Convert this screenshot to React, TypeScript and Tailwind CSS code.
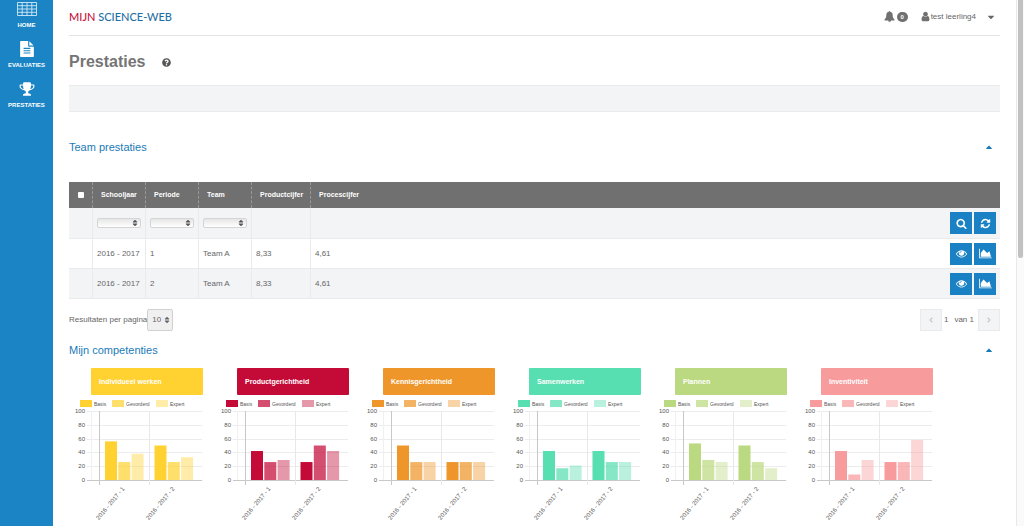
import React from 'react';
import { FaQuestionCircle, FaCaretDown, FaCaretUp, FaSort, FaAngleLeft, FaAngleRight } from 'react-icons/fa';

const ICONS = {
  fileText:
    'M1596 476q14 14 28 36h-472v-472q22 14 36 28zm-476 164h544v1056q0 40-28 68t-68 28h-1344q-40 0-68-28t-28-68v-1600q0-40 28-68t68-28h800v544q0 40 28 68t68 28zm160 736v-64q0-14-9-23t-23-9h-704q-14 0-23 9t-9 23v64q0 14 9 23t23 9h704q14 0 23-9t9-23zm0-256v-64q0-14-9-23t-23-9h-704q-14 0-23 9t-9 23v64q0 14 9 23t23 9h704q14 0 23-9t9-23zm0-256v-64q0-14-9-23t-23-9h-704q-14 0-23 9t-9 23v64q0 14 9 23t23 9h704q14 0 23-9t9-23z',
  trophy:
    'M522 883q-74-162-74-371h-256v96q0 78 94.5 162t235.5 113zm1078-275v-96h-256q0 209-74 371 141-29 235.5-113t94.5-162zm128-128v128q0 71-41.5 143t-112 130-173 97.5-215.5 44.5q-42 54-95 95-38 34-52.5 72.5t-14.5 89.5q0 54 30.5 91t97.5 37q75 0 133.5 45.5t58.5 114.5v64q0 14-9 23t-23 9h-832q-14 0-23-9t-9-23v-64q0-69 58.5-114.5t133.5-45.5q67 0 97.5-37t30.5-91q0-51-14.5-89.5t-52.5-72.5q-53-41-95-95-113-5-215.5-44.5t-173-97.5-112-130-41.5-143v-128q0-40 28-68t68-28h288v-96q0-66 47-113t113-47h576q66 0 113 47t47 113v96h288q40 0 68 28t28 68z',
  bell: 'M912 1696q0-16-16-16-59 0-101.5-42.5t-42.5-101.5q0-16-16-16t-16 16q0 73 51.5 124.5t124.5 51.5q16 0 16-16zm816-288q0 52-38 90t-90 38h-448q0 106-75 181t-181 75-181-75-75-181h-448q-52 0-90-38t-38-90q50-42 91-88t85-119.5 74.5-158.5 50-206 19.5-260q0-152 117-282.5t307-158.5q-8-19-8-39 0-40 28-68t68-28 68 28 28 68q0 20-8 39 190 28 307 158.5t117 282.5q0 139 19.5 260t50 206 74.5 158.5 85 119.5 91 88z',
  user: 'M1536 1399q0 109-62.5 187t-150.5 78h-854q-88 0-150.5-78t-62.5-187q0-85 8.5-160.5t31.5-152 58.5-131 94-89 134.5-34.5q131 128 313 128t313-128q76 0 134.5 34.5t94 89 58.5 131 31.5 152 8.5 160.5zm-256-887q0 159-112.5 271.5t-271.5 112.5-271.5-112.5-112.5-271.5 112.5-271.5 271.5-112.5 271.5 112.5 112.5 271.5z',
  search:
    'M1216 832q0-185-131.5-316.5t-316.5-131.5-316.5 131.5-131.5 316.5 131.5 316.5 316.5 131.5 316.5-131.5 131.5-316.5zm512 832q0 52-38 90t-90 38q-54 0-90-38l-343-342q-179 124-399 124-143 0-273.5-55.5t-225-150-150-225-55.5-273.5 55.5-273.5 150-225 225-150 273.5-55.5 273.5 55.5 225 150 150 225 55.5 273.5q0 220-124 399l343 343q37 37 37 90z',
  refresh:
    'M1639 1056q0 5-1 7-64 268-268 434.5t-478 166.5q-146 0-282.5-55t-243.5-157l-129 129q-19 19-45 19t-45-19-19-45v-448q0-26 19-45t45-19h448q26 0 45 19t19 45-19 45l-137 137q71 66 161 102t187 36q134 0 250-65t186-179q11-17 53-117 8-23 30-23h192q13 0 22.5 9.5t9.5 22.5zm25-800v448q0 26-19 45t-45 19h-448q-26 0-45-19t-19-45 19-45l138-138q-148-137-349-137-134 0-250 65t-186 179q-11 17-53 117-8 23-30 23h-199q-13 0-22.5-9.5t-9.5-22.5v-7q65-268 270-434.5t480-166.5q146 0 284 55.5t245 156.5l130-129q19-19 45-19t45 19 19 45z',
  eye: 'M1664 960q-152-236-381-353 61 104 61 225 0 185-131.5 316.5t-316.5 131.5-316.5-131.5-131.5-316.5q0-121 61-225-229 117-381 353 133 205 333.5 326.5t434.5 121.5 434.5-121.5 333.5-326.5zm-720-384q0-20-14-34t-34-14q-125 0-214.5 89.5t-89.5 214.5q0 20 14 34t34 14 34-14 14-34q0-86 61-147t147-61q20 0 34-14t14-34zm848 384q0 34-20 69-140 230-376.5 368.5t-499.5 138.5-499.5-139-376.5-368q-20-35-20-69t20-69q140-229 376.5-368t499.5-139 499.5 139 376.5 368q20 35 20 69z',
  chart: 'M2048 1536v128h-2048v-1536h128v1408h1920zm-384-1024l256 896h-1664v-576l448-576 576 576z',
};

type IconProps = { name: keyof typeof ICONS; className: string };

const Icon: React.FC<IconProps> = ({ name, className }) => (
  <svg
    viewBox={name === 'chart' ? '0 0 2048 1792' : '0 0 1792 1792'}
    fill="currentColor"
    aria-hidden="true"
    className={className}
  >
    <path d={ICONS[name]} />
  </svg>
);

const GridIcon = () => (
  <svg viewBox="0 0 20 14" className="w-5 h-[14px]" fill="none" stroke="#d3e9f7" strokeWidth="0.9" aria-hidden="true">
    <path d="M.5.5h19v13H.5zM.5 3.7h19M.5 7h19M.5 10.3h19M5.2.5v13M10 .5v13M14.8.5v13" />
  </svg>
);

const competencies = [
  { title: 'Individueel werken', color: '#ffd232', values: [[56, 26, 38], [50, 26, 33]] },
  { title: 'Productgerichtheid', color: '#c40a37', values: [[42, 26, 29], [26, 50, 42]] },
  { title: 'Kennisgerichtheid', color: '#ef962a', values: [[50, 26, 26], [26, 26, 26]] },
  { title: 'Samenwerken', color: '#57deb1', values: [[42, 17, 21], [42, 26, 26]] },
  { title: 'Plannen', color: '#bbd980', values: [[53, 29, 26], [50, 26, 17]] },
  { title: 'Inventiviteit', color: '#f79b9d', values: [[42, 8, 29], [26, 26, 58]] },
];

const levels = [
  { label: 'Basis', opacity: 1, x: 11 },
  { label: 'Gevorderd', opacity: 0.72, x: 43 },
  { label: 'Expert', opacity: 0.42, x: 87 },
];

const teamRows = [
  { year: '2016 - 2017', period: '1', team: 'Team A', product: '8,33', process: '4,61' },
  { year: '2016 - 2017', period: '2', team: 'Team A', product: '8,33', process: '4,61' },
];

const BASE = 84;
const SCALE = 0.69;

const CompetencyChart: React.FC<{ color: string; values: number[][] }> = ({ color, values }) => (
  <svg width="146" height="130" className="mt-px block font-['Liberation_Sans',Arial,sans-serif]" fill="#555">
    {levels.map((level) => (
      <g key={level.label}>
        <rect x={level.x} y="4" width="12" height="7" fill={color} opacity={level.opacity} />
        <text x={level.x + 14} y="10" fontSize="5">{level.label}</text>
      </g>
    ))}
    {[0, 20, 40, 60, 80, 100].map((tick) => (
      <g key={tick}>
        <text x="16" y={BASE - tick * SCALE + 2} fontSize="6" textAnchor="end">{tick}</text>
        <rect x="18" y={Math.round(BASE - tick * SCALE)} width="115" height="1" fill={tick ? '#ececec' : '#c8c8c8'} />
      </g>
    ))}
    <rect x="22" y="15" width="1" height="69" fill="#f0f0f0" />
    <rect x="30" y="15" width="1" height="74" fill="#c8c8c8" />
    <rect x="80" y="15" width="1" height="74" fill="#e8e8e8" />
    {values.map((group, g) => (
      <g key={g}>
        {group.map((value, i) => (
          <rect
            key={i}
            x={36 + g * 49.5 + i * 13.3}
            y={BASE - value * SCALE}
            width="12"
            height={value * SCALE}
            fill={color}
            opacity={levels[i].opacity}
          />
        ))}
        <text fontSize="6" textAnchor="end" transform={`translate(${56 + g * 50} 93) rotate(-50)`}>
          2016 - 2017 - {g + 1}
        </text>
      </g>
    ))}
  </svg>
);

const NavItem: React.FC<{ label: string; children: React.ReactNode }> = ({ label, children }) => (
  <a href="#" className="flex h-10 flex-col items-center gap-1 text-[6px] leading-[8px] font-bold text-white">
    <span className="flex h-4 items-center">{children}</span>
    {label}
  </a>
);

const FilterSelect: React.FC<{ label: string }> = ({ label }) => (
  <div className="relative">
    <select
      aria-label={label}
      className="block h-[10px] w-11 appearance-none rounded-[2px] border border-[#d5d5d5] bg-linear-to-b from-[#e6e6e6] to-white"
    >
      <option></option>
    </select>
    <FaSort className="pointer-events-none absolute top-px right-0.5 h-2 w-2 text-[#555]" />
  </div>
);

const ActionButton: React.FC<IconProps & { label: string }> = ({ label, name, className }) => (
  <button aria-label={label} className="flex h-[22px] w-[22px] items-center justify-center bg-[#1a82c4] text-white">
    <Icon name={name} className={className} />
  </button>
);

const SectionTitle: React.FC<{ title: string }> = ({ title }) => (
  <div className="flex items-center justify-between pr-1.5 text-[#1a7bb8]">
    <h2 className="text-[11px] leading-4">{title}</h2>
    <button aria-label={`${title} inklappen`}>
      <FaCaretUp className="h-[10px] w-[10px]" />
    </button>
  </div>
);

const head = 'border-r border-dashed border-[#999] px-2 text-left font-bold';
const cell = 'border-b border-b-[#e9eaec] border-r border-r-[#e9eaec] px-1 py-0';

const App: React.FC = () => {
  return (
    <div className="flex h-screen overflow-hidden bg-white font-['Liberation_Sans',Arial,sans-serif] text-[8px] leading-[10px] text-[#666]">
      <nav className="flex w-[53px] shrink-0 flex-col bg-[#1a84c4] pt-px">
        <NavItem label="HOME"><GridIcon /></NavItem>
        <NavItem label="EVALUATIES"><Icon name="fileText" className="h-4 w-4" /></NavItem>
        <NavItem label="PRESTATIES"><Icon name="trophy" className="h-4 w-4" /></NavItem>
      </nav>

      <main className="min-w-0 flex-1 px-4">
        <header className="flex h-9 items-center justify-between border-b border-[#e4e4e4] pb-0.5">
          <a href="#" className="font-[Lato,sans-serif] text-[11px] leading-4 font-medium text-[#1f6fa5]">
            <span className="text-[#c8143f]">MIJN</span> SCIENCE-WEB
          </a>
          <div className="flex items-center pr-1">
            <button aria-label="Meldingen" className="flex items-center gap-0.5">
              <Icon name="bell" className="h-[11px] w-[11px] text-[#707070]" />
              <span className="flex h-[10px] w-[11px] items-center justify-center rounded-full bg-[#707070] text-[6px] font-bold text-white">0</span>
            </button>
            <button className="ml-3 flex items-center">
              <Icon name="user" className="h-[11px] w-[11px] text-[#707070]" />
              <span>test leerling4</span>
              <FaCaretDown className="ml-2.5 h-[10px] w-[10px]" />
            </button>
          </div>
        </header>

        <div className="mt-4 flex items-center gap-4">
          <h1 className="text-[16px] leading-5 font-bold text-[#757575]">Prestaties</h1>
          <FaQuestionCircle className="h-[9px] w-[9px] text-[#555]" />
        </div>
        <div className="mt-[13px] mb-[27px] h-[27px] border-y border-[#e9eaec] bg-[#f3f4f6]" />

        <SectionTitle title="Team prestaties" />

        <table className="mt-[27px] w-full table-fixed border-separate border-spacing-0">
          <thead>
            <tr className="h-[26px] bg-[#707070] text-[7px] text-white">
              <th className="w-6 border-r border-dashed border-[#999] p-0">
                <input type="checkbox" aria-label="Alles selecteren" className="mx-auto block h-1.5 w-1.5 appearance-none rounded-[1px] bg-white" />
              </th>
              <th className={`w-[53px] ${head}`}>Schooljaar</th>
              <th className={`w-[53px] ${head}`}>Periode</th>
              <th className={`w-[53px] ${head}`}>Team</th>
              <th className={`w-[59px] ${head}`}>Productcijfer</th>
              <th className="px-2 text-left font-bold">Procescijfer</th>
              <th className="w-[56px]"></th>
            </tr>
          </thead>
          <tbody>
            <tr className="h-[31px] bg-[#f3f4f6]">
              <td className={cell}></td>
              <td className={cell}><FilterSelect label="Schooljaar" /></td>
              <td className={cell}><FilterSelect label="Periode" /></td>
              <td className={cell}><FilterSelect label="Team" /></td>
              <td className={cell}></td>
              <td className="border-b border-[#e9eaec]"></td>
              <td className="border-b border-[#e9eaec] p-0 pr-1">
                <div className="flex justify-end gap-0.5">
                  <ActionButton label="Zoeken" name="search" className="h-[11px] w-[11px]" />
                  <ActionButton label="Vernieuwen" name="refresh" className="h-[11px] w-[11px]" />
                </div>
              </td>
            </tr>
            {teamRows.map((row) => (
              <tr key={row.period} className="h-[30px] even:bg-white odd:bg-[#f3f4f6]">
                <td className={cell}></td>
                <td className={`${cell} whitespace-nowrap`}>{row.year}</td>
                <td className={cell}>{row.period}</td>
                <td className={cell}>{row.team}</td>
                <td className={cell}>{row.product}</td>
                <td className="border-b border-[#e9eaec] px-1">{row.process}</td>
                <td className="border-b border-[#e9eaec] p-0 pr-1">
                  <div className="flex justify-end gap-0.5">
                    <ActionButton label="Bekijken" name="eye" className="h-[11px] w-[11px]" />
                    <ActionButton label="Grafiek" name="chart" className="h-[11px] w-[13px]" />
                  </div>
                </td>
              </tr>
            ))}
          </tbody>
        </table>

        <div className="mt-[10px] mb-[11px] flex items-center justify-between">
          <div className="flex items-center">
            <label htmlFor="page-size">Resultaten per pagina</label>
            <div className="relative">
              <select
                id="page-size"
                className="block h-[22px] w-[26px] appearance-none rounded-[2px] border border-[#d0d0d0] bg-[#f0f0f0] pl-1"
              >
                <option>10</option>
              </select>
              <FaSort className="pointer-events-none absolute top-[7px] right-0.5 h-2 w-2" />
            </div>
          </div>
          <div className="flex items-center">
            <button disabled aria-label="Vorige" className="flex h-[22px] w-[22px] items-center justify-center border border-[#e9eaec] bg-[#f3f4f6] text-[#c8c8c8]">
              <FaAngleLeft className="h-2 w-2" />
            </button>
            <span className="ml-0.5">1</span>
            <span className="mr-1 ml-1.5">van 1</span>
            <button disabled aria-label="Volgende" className="flex h-[22px] w-[22px] items-center justify-center border border-[#e9eaec] bg-[#f3f4f6] text-[#c8c8c8]">
              <FaAngleRight className="h-2 w-2" />
            </button>
          </div>
        </div>

        <SectionTitle title="Mijn competenties" />

        <div className="mt-[10px] grid grid-cols-6 pr-[55px]">
          {competencies.map((item) => (
            <section key={item.title} className="min-w-0">
              <h3
                className="mr-3 ml-[22px] h-[27px] rounded-[1px] pl-2 text-[7px] leading-[27px] font-bold text-white"
                style={{ backgroundColor: item.color }}
              >
                {item.title}
              </h3>
              <CompetencyChart color={item.color} values={item.values} />
            </section>
          ))}
        </div>
      </main>

      {/* Scroll rail */}
      <div className="w-2 shrink-0 border-l border-[#e8e8e8] bg-[#fafafa] px-px">
        <div className="h-[49vh] rounded-b-full bg-[#c1c1c1]" />
      </div>
    </div>
  );
};

export default App;
